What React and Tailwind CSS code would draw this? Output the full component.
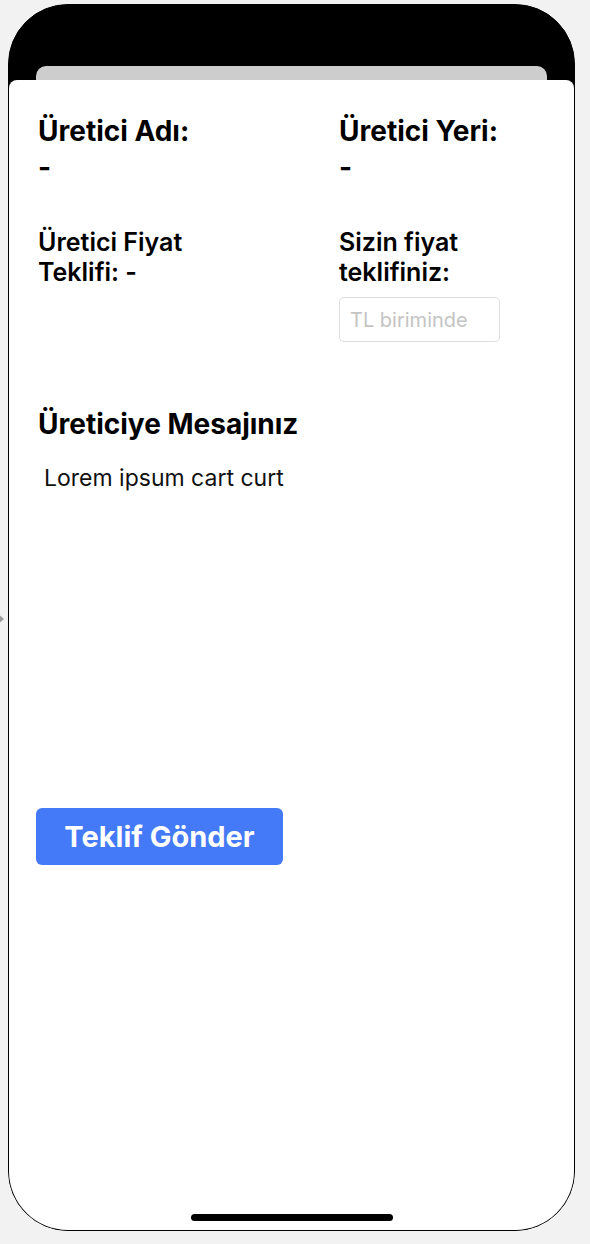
import React from 'react';

const font = { fontFamily: 'Inter, "Noto Sans", sans-serif' };

export default function App() {
    return (
        <div className="relative w-[590px] h-[1244px] bg-[#f2f2f2] overflow-hidden" style={font}>
            {/* side arrow peeking from the left edge */}
            <div className="absolute left-[-4px] top-[612px] w-0 h-0 border-y-[7px] border-y-transparent border-l-[8px] border-l-[#9a9a9a]" />

            <div className="absolute left-[8px] top-[4px] w-[567px] h-[1227px] rounded-[60px] border-[1.5px] border-black bg-black overflow-hidden flex flex-col">
                <div className="h-[61px] shrink-0" />
                <div className="h-[14px] mx-[27px] rounded-t-[10px] bg-[#cdcdcd] shrink-0" />
                <div className="flex-1 bg-white rounded-t-[8px] flex flex-col relative">
                    <div className="grid grid-cols-[301px_1fr] pl-[29px] pt-[33px]">
                        <div className="text-[28px] font-bold leading-[36px] text-black">
                            <div>Üretici Adı:</div>
                            <div>-</div>
                        </div>
                        <div className="text-[28px] font-bold leading-[36px] text-black">
                            <div>Üretici Yeri:</div>
                            <div>-</div>
                        </div>

                        <div className="mt-[42px] text-[25px] font-semibold leading-[30px] text-black">
                            Üretici Fiyat
                            <br />
                            Teklifi: -
                        </div>
                        <div className="mt-[42px]">
                            <div className="text-[25px] font-semibold leading-[30px] text-black">
                                Sizin fiyat
                                <br />
                                teklifiniz:
                            </div>
                            <input
                                type="text"
                                placeholder="TL biriminde"
                                className="mt-[10px] w-[161px] h-[45px] rounded-[5px] border border-[#dedede] px-[10px] text-[20px] outline-none placeholder-[#c4c4c4]"
                            />
                        </div>
                    </div>

                    <div className="pl-[29px] mt-[65px] text-[28px] font-bold leading-[34px] text-black">
                        Üreticiye Mesajınız
                    </div>
                    <div className="pl-[35px] mt-[22px] text-[23px] leading-[30px] text-[#111]">
                        Lorem ipsum cart curt
                    </div>

                    <div className="pl-[27px] mt-[315px]">
                        <button className="w-[247px] h-[57px] rounded-[6px] bg-[#4479f7] text-white text-[29px] font-bold">
                            Teklif Gönder
                        </button>
                    </div>

                    <div className="absolute left-1/2 -translate-x-1/2 bottom-[9px] w-[202px] h-[7px] rounded-full bg-black" />
                </div>
            </div>
        </div>
    );
}
